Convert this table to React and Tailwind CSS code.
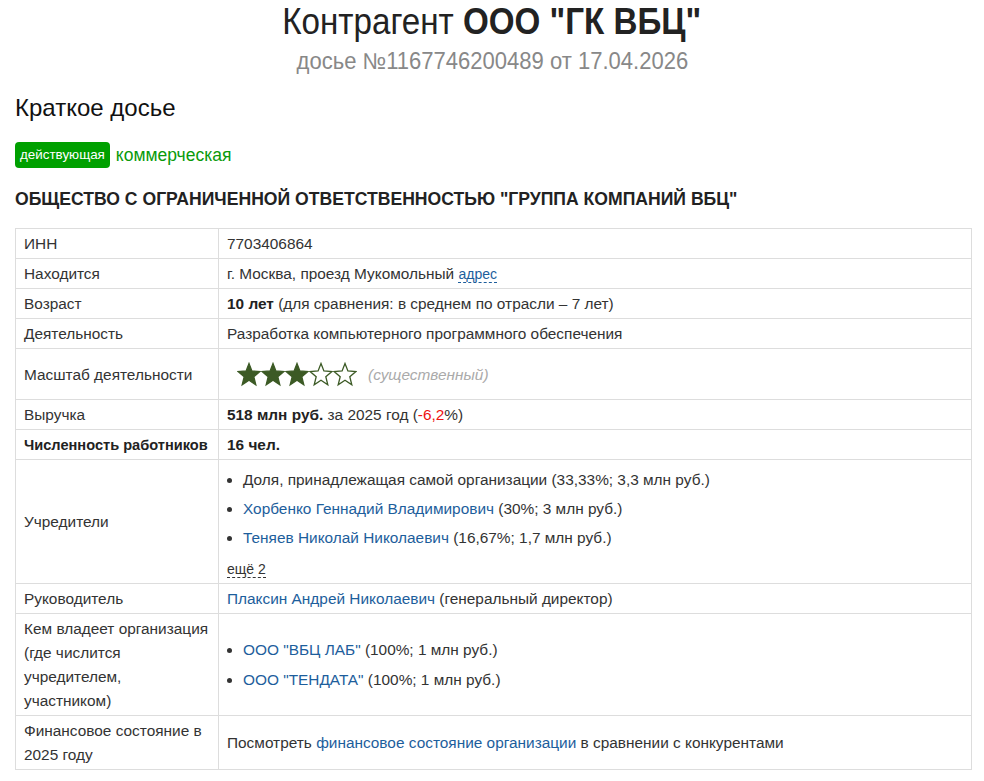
const LINK = 'text-[#1d5e9c]'

function Star({ filled }) {
  return (
    <svg width="24" height="25" viewBox="0 0 24 25" className="block">
      <polygon
        points="12,1.5 14.9,9 22.9,9.5 16.8,14.7 18.8,22.8 12,18.3 5.2,22.8 7.2,14.7 1.1,9.5 9.1,9"
        fill={filled ? '#3c5a25' : 'none'}
        stroke="#3c5a25"
        strokeWidth="1.3"
      />
    </svg>
  )
}

function Row({ label, children }) {
  return (
    <tr>
      <td className="border border-[#dddddd] px-[8px] pt-[3px] pb-[2px] align-middle">{label}</td>
      <td className="border border-[#dddddd] px-[8px] pt-[3px] pb-[2px] align-middle">{children}</td>
    </tr>
  )
}

export default function App() {
  return (
    <div className="min-h-[781px] bg-white text-[#333333] font-['Liberation_Sans',Arial,sans-serif]">
      {/* Шапка */}
      <div className="text-center">
        <h1 className="text-[37px] leading-[44px] text-[#222222]">
          <span className="inline-block scale-x-[0.896]">
            Контрагент <b>ООО "ГК ВБЦ"</b>
          </span>
        </h1>
        <div className="mt-[2px] text-[23px] leading-[30px] text-[#888888]">
          <span className="inline-block scale-x-[0.958]">досье №1167746200489 от 17.04.2026</span>
        </div>
      </div>

      <div className="px-[15px]">
        <h2 className="mt-[17px] text-[24px] leading-[30px] text-[#111111]">Краткое досье</h2>

        <div className="mt-[19px] flex items-center gap-[6px]">
          <span className="inline-flex items-center h-[26px] px-[5px] rounded-[4px] bg-[#00a000] text-white text-[13.4px]">
            действующая
          </span>
          <span className="text-[17.5px] text-[#0a9a0a]">коммерческая</span>
        </div>

        <h3 className="mt-[20px] text-[17.6px] leading-[22px] font-bold text-[#222222]">
          ОБЩЕСТВО С ОГРАНИЧЕННОЙ ОТВЕТСТВЕННОСТЬЮ "ГРУППА КОМПАНИЙ ВБЦ"
        </h3>

        {/* Таблица */}
        <table className="mt-[18px] w-[957px] table-fixed border-collapse text-[15.4px] leading-[24px]">
          <colgroup>
            <col className="w-[203px]" />
            <col />
          </colgroup>
          <tbody>
            <Row label="ИНН">7703406864</Row>
            <Row label="Находится">
              г. Москва, проезд Мукомольный{' '}
              <span className={`${LINK} text-[14px] border-b border-dashed border-[#1d5e9c] leading-[16px]`}>адрес</span>
            </Row>
            <Row label="Возраст">
              <b className="text-[#222222]">10 лет</b> (для сравнения: в среднем по отрасли – 7 лет)
            </Row>
            <Row label="Деятельность">Разработка компьютерного программного обеспечения</Row>
            <Row label="Масштаб деятельности">
              <div className="flex items-center h-[45px] pl-[10px]">
                <Star filled />
                <Star filled />
                <Star filled />
                <Star />
                <Star />
                <span className="ml-[11px] italic text-[15.4px] text-[#aaaaaa]">(существенный)</span>
              </div>
            </Row>
            <Row label="Выручка">
              <b className="text-[#222222]">518 млн руб.</b> за 2025 год (<span className="text-[#ee1111]">-6,2</span>%)
            </Row>
            <Row label={<b className="text-[#222222] whitespace-nowrap text-[14.6px]">Численность работников</b>}>
              <b className="text-[#222222]">16 чел.</b>
            </Row>
            <Row label="Учредители">
              <ul className="list-disc pl-[16px] mt-[5px] mb-[7px] space-y-[5px]">
                <li>Доля, принадлежащая самой организации (33,33%; 3,3 млн руб.)</li>
                <li><span className={LINK}>Хорбенко Геннадий Владимирович</span> (30%; 3 млн руб.)</li>
                <li><span className={LINK}>Теняев Николай Николаевич</span> (16,67%; 1,7 млн руб.)</li>
              </ul>
              <span className="text-[14px] border-b border-dashed border-[#333333] leading-[16px]">ещё 2</span>
            </Row>
            <Row label="Руководитель">
              <span className={LINK}>Плаксин Андрей Николаевич</span> (генеральный директор)
            </Row>
            <Row label="Кем владеет организация (где числится учредителем, участником)">
              <ul className="list-disc pl-[16px] space-y-[6px]">
                <li><span className={LINK}>ООО "ВБЦ ЛАБ"</span> (100%; 1 млн руб.)</li>
                <li><span className={LINK}>ООО "ТЕНДАТА"</span> (100%; 1 млн руб.)</li>
              </ul>
            </Row>
            <Row label="Финансовое состояние в 2025 году">
              Посмотреть <span className={LINK}>финансовое состояние организации</span> в сравнении с конкурентами
            </Row>
          </tbody>
        </table>
      </div>
    </div>
  )
}
